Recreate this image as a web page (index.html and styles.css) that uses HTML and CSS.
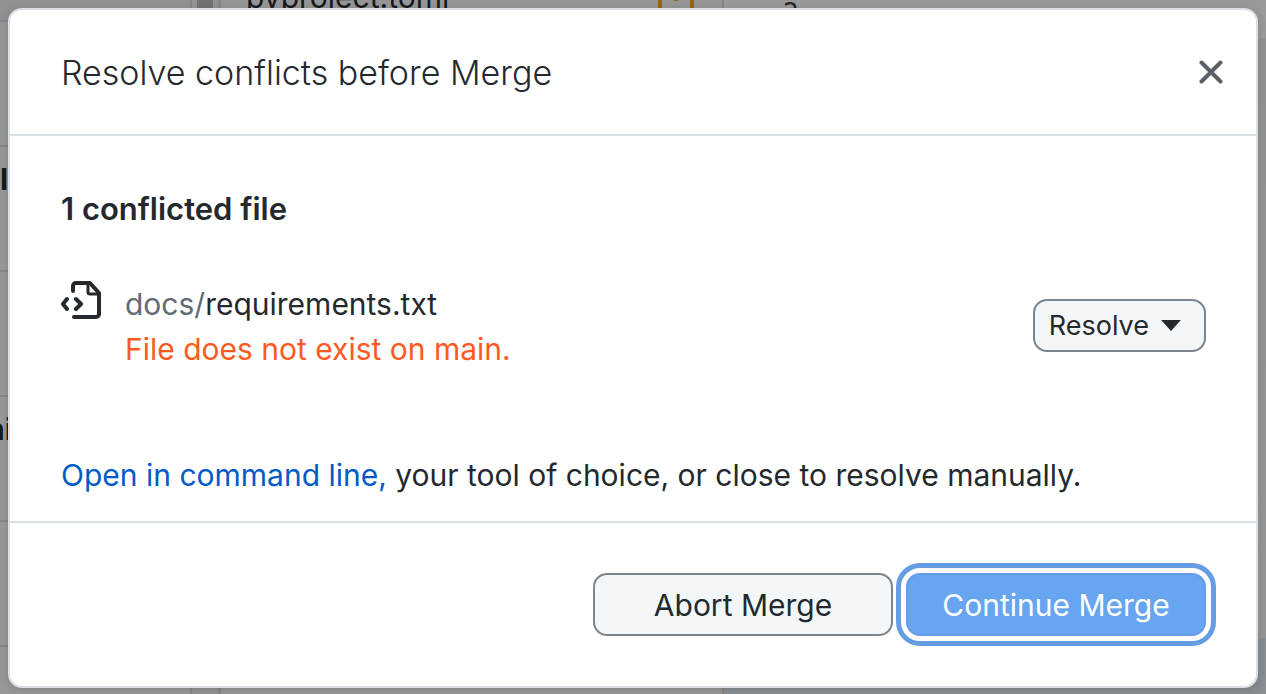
FILE: index.html
```html
<!DOCTYPE html>
<html lang="en">
<head>
<meta charset="utf-8">
<title>Resolve conflicts before Merge</title>
<link rel="stylesheet" href="styles.css">
</head>
<body>
<div class="workspace" aria-hidden="true">
  <div class="history">
    <div class="commit commit-first"></div>
    <div class="commit"></div>
    <div class="commit"><span class="commit-title">l</span></div>
    <div class="commit"></div>
    <div class="commit"><span class="commit-title">ni</span></div>
    <div class="commit"></div>
    <div class="commit"></div>
  </div>
  <div class="gutter"><div class="thumb"></div></div>
  <div class="files"><span class="file-name">pyproject.toml</span>
    <svg class="modified" viewBox="0 0 36 36"><rect x="2" y="-2" width="32" height="36" fill="none" stroke="currentColor" stroke-width="4"/><circle cx="18" cy="21" r="4" fill="currentColor"/></svg>
  </div>
  <div class="diff"><span class="line-number">2</span></div>
</div>
<div class="overlay">
  <main class="dialog" role="dialog" aria-labelledby="dialog-title">
    <header class="dialog-header">
      <h1 class="dialog-title" id="dialog-title">Resolve conflicts before Merge</h1>
      <button class="close" type="button" aria-label="Close">
        <svg class="close-icon" viewBox="0 0 24 24"><path d="M2.5 2.5 21.5 21.5M21.5 2.5 2.5 21.5" fill="none" stroke="currentColor" stroke-width="4" stroke-linecap="round"/></svg>
      </button>
    </header>
    <section class="dialog-body">
      <h2 class="summary">1 conflicted file</h2>
      <div class="conflict">
        <svg class="file-icon" viewBox="0 0 42 38"><g fill="none" stroke="currentColor" stroke-width="4" stroke-linecap="round" stroke-linejoin="round"><path d="M12 10V5a3 3 0 0 1 3-3h14L38 12v21a3 3 0 0 1-3 3H13"/><path d="M27 3v8a2 2 0 0 0 2 2h9" stroke-width="3"/><path d="M6 18 2 23l4 5M15 18l5 5-5 5"/></g></svg>
        <div class="conflict-text">
          <div class="path"><span class="folder">docs/</span>requirements.txt</div>
          <div class="status">File does not exist on main.</div>
        </div>
        <button class="button resolve" type="button">Resolve
          <svg class="caret" viewBox="0 0 18 10"><path d="M0 0H18L9 10Z" fill="currentColor"/></svg>
        </button>
      </div>
      <p class="help"><a class="link" href="#">Open in command line,</a> your tool of choice, or close to resolve manually.</p>
    </section>
    <footer class="dialog-footer">
      <button class="button action" type="button">Abort Merge</button>
      <button class="button action primary" type="button">Continue Merge</button>
    </footer>
  </main>
</div>
</body>
</html>
```
FILE: styles.css
```css
* {
  box-sizing: border-box;
}

body {
  margin: 0;
  min-height: 100vh;
  overflow: hidden;
  color: #24292e;
  background: #999;
  font-family: Inter, "Liberation Sans", sans-serif;
  font-size: 30px;
}

h1,
h2,
p {
  margin: 0;
}

button {
  font: inherit;
  color: inherit;
  cursor: pointer;
}

.workspace {
  position: absolute;
  inset: 0;
  display: grid;
  grid-template-columns: 190px 31px 503px 1fr;
  overflow: hidden;
}

.history {
  background: #969896;
}

.commit {
  display: flex;
  align-items: flex-start;
  height: 125px;
  border-bottom: 2px solid #858689;
  color: #17191c;
  font-weight: 700;
}

.commit-first {
  height: 22px;
  background: #8f9194;
}

.commit-title {
  margin-top: 14px;
}

.commit:nth-child(5) .commit-title {
  margin-left: -14px;
}

.gutter {
  padding-left: 5px;
  border-left: 2px solid #858689;
  border-right: 3px solid #858689;
  background: #929392;
}

.thumb {
  width: 16px;
  height: 100px;
  background: #737373;
}

.files {
  display: flex;
  align-items: flex-start;
  justify-content: space-between;
  padding: 0 28px 0 25px;
  border-right: 2px solid #858689;
  background: #969696;
}

.file-name {
  margin-top: -21px;
  color: #17191c;
  line-height: 36px;
}

.modified {
  width: 36px;
  height: 36px;
  margin-top: -24px;
  color: #926414;
}

.diff {
  padding-left: 59px;
  background: linear-gradient(#999 38px, #8f9194 38px, #959595 638px, #888d92 638px);
}

.line-number {
  display: block;
  margin-top: -2px;
  color: #24292e;
  font-family: "DejaVu Sans Mono", monospace;
  font-size: 26px;
}

.overlay {
  position: relative;
  display: flex;
  min-height: 100vh;
  padding: 8px 8px 6px;
}

.dialog {
  display: flex;
  flex: 1;
  flex-direction: column;
  border: 2px solid #dcdfe3;
  border-radius: 14px;
  background: #fff;
  box-shadow: 0 2px 10px rgba(0, 0, 0, 0.12);
}

.dialog-header {
  display: flex;
  align-items: flex-start;
  justify-content: space-between;
  padding: 40px 33px 38px 51px;
  border-bottom: 2px solid #dadfe3;
}

.dialog-title {
  font-size: 34px;
  font-weight: 300;
  line-height: 46px;
}

.close {
  display: flex;
  margin-top: 10px;
  padding: 0;
  border: 0;
  background: none;
  color: #586069;
}

.close-icon {
  width: 24px;
  height: 24px;
}

.dialog-body {
  padding: 50px 50px 23px 51px;
}

.summary {
  font-size: 31px;
  font-weight: 600;
  line-height: 46px;
}

.conflict {
  display: flex;
  align-items: flex-start;
  margin: 49px 0 80px;
}

.file-icon {
  width: 42px;
  height: 38px;
}

.conflict-text {
  flex: 1;
  margin-left: 22px;
  padding-top: 1px;
  line-height: 45px;
}

.folder {
  color: #626b74;
}

.status {
  color: #fb5a21;
}

.button {
  display: flex;
  align-items: center;
  justify-content: center;
  border: 2px solid #7b858e;
  border-radius: 14px;
  background: #f3f7fa;
}

.resolve {
  gap: 12px;
  height: 53px;
  margin-top: 18px;
  padding: 0 23px 0 14px;
  font-size: 27px;
}

.caret {
  width: 20px;
  height: 11px;
}

.help {
  line-height: 46px;
}

.link {
  color: #005bc9;
  text-decoration: none;
}

.dialog-footer {
  display: flex;
  flex: 1;
  align-items: flex-start;
  justify-content: flex-end;
  gap: 13px;
  padding: 50px;
  border-top: 2px solid #dadfe3;
}

.action {
  width: 300px;
  height: 63px;
}

.primary {
  border-color: #659de7;
  background: #67a5f0;
  color: #fff;
  outline: 5px solid #659de0;
  outline-offset: 5px;
}
```
